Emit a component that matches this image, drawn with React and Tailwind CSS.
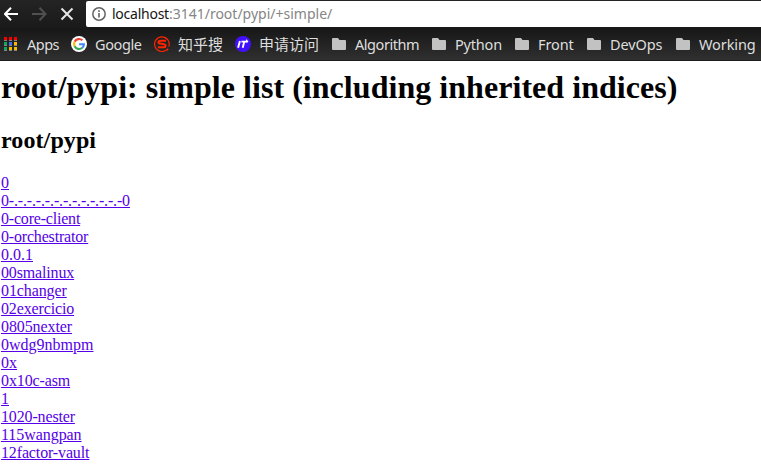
import React from "react";

const packages = [
  { name: "0", tracking: "" },
  { name: "0-.-.-.-.-.-.-.-.-.-.-.-.-0", tracking: "tracking-[-0.16px]" },
  { name: "0-core-client", tracking: "tracking-[-0.2px]" },
  { name: "0-orchestrator", tracking: "tracking-[-0.18px]" },
  { name: "0.0.1", tracking: "" },
  { name: "00smalinux", tracking: "tracking-[-0.15px]" },
  { name: "01changer", tracking: "tracking-[-0.1px]" },
  { name: "02exercicio", tracking: "tracking-[-0.14px]" },
  { name: "0805nexter", tracking: "tracking-[-0.1px]" },
  { name: "0wdg9nbmpm", tracking: "" },
  { name: "0x", tracking: "" },
  { name: "0x10c-asm", tracking: "tracking-[-0.12px]" },
  { name: "1", tracking: "" },
  { name: "1020-nester", tracking: "tracking-[-0.15px]" },
  { name: "115wangpan", tracking: "tracking-[-0.06px]" },
  { name: "12factor-vault", tracking: "tracking-[-0.14px]" },
];

function AppsIcon() {
  const colors = ["#f60000", "#f60000", "#f60000", "#10a860", "#4468f8", "#f8b800", "#10a860", "#f8b800", "#f8b800"];
  return (
    <svg width="14" height="14" viewBox="0 0 14 14" shapeRendering="crispEdges">
      {colors.map((c, i) => (
        <g key={i}>
          <rect x={(i % 3) * 5} y={Math.floor(i / 3) * 5} width="3" height="3" fill={c} />
          <rect x={(i % 3) * 5} y={Math.floor(i / 3) * 5 + 3} width="3" height="1" fill="#a8a29c" opacity="0.75" />
        </g>
      ))}
    </svg>
  );
}

function GoogleIcon() {
  return (
    <svg width="16" height="16" viewBox="0 0 16 16" fill="none" strokeWidth="2.1">
      <circle cx="8" cy="8" r="8" fill="#fff" />
      <path d="M11.4 4.3A5 5 0 0 0 3.6 5.8" stroke="#ea4335" />
      <path d="M3.7 5.6A5 5 0 0 0 3.7 10.4" stroke="#fbbc05" />
      <path d="M3.6 10.2A5 5 0 0 0 11.3 11.8" stroke="#34a853" />
      <path d="M8.1 8.2H12.9C12.8 9.7 12.2 11 11.2 11.8" stroke="#4285f4" />
    </svg>
  );
}

function SogouIcon() {
  return (
    <svg width="16" height="16" viewBox="0 0 16 16" fill="none" stroke="#fb2500">
      <path d="M12.8 13.6A7.3 7.3 0 1 1 14.8 10.6" strokeWidth="1.2" />
      <path d="M12 4.7H6.5C4 4.7 3.6 7.2 6 7.6L10 8.3C12.4 8.8 12 11.3 9.6 11.3H4" strokeWidth="2" />
      <path d="M12.6 14.4L14.2 12.8" strokeWidth="1.5" />
    </svg>
  );
}

function ItIcon() {
  return (
    <svg width="16" height="16" viewBox="0 0 16 16">
      <circle cx="8" cy="8" r="8" fill="#4310ff" />
      <path d="M4.9 5L3.1 11.8M6.4 5.6H12.8M9.3 5.4L7.7 11.8" stroke="#fff" strokeWidth="1.9" fill="none" />
      <path d="M11 3L13.6 5.8L11 6.6Z" fill="#fff" />
    </svg>
  );
}

function FolderIcon() {
  return (
    <svg width="14" height="12" viewBox="0 0 14 12">
      <path d="M1 0H6L7.5 2H13Q14 2 14 3V11Q14 12 13 12H1Q0 12 0 11V1Q0 0 1 0Z" fill="#c2c2c2" />
    </svg>
  );
}

const bookmarks = [
  { label: "Apps", icon: <AppsIcon />, item: "w-[67px] gap-[9px]", text: "tracking-[-0.5px]" },
  { label: "Google", icon: <GoogleIcon />, item: "w-[83px] gap-2", text: "tracking-[-0.4px]" },
  { label: "知乎搜", icon: <SogouIcon />, item: "w-[81px] gap-2", text: "text-[15px]" },
  { label: "申请访问", icon: <ItIcon />, item: "w-[97px] gap-2", text: "text-[15px]" },
  { label: "Algorithm", icon: <FolderIcon />, item: "w-[100px] gap-[9px]", text: "tracking-[-0.45px]" },
  { label: "Python", icon: <FolderIcon />, item: "w-[83px] gap-[9px]", text: "tracking-[-0.2px]" },
  { label: "Front", icon: <FolderIcon />, item: "w-[72px] gap-[9px]", text: "tracking-[-0.1px]" },
  { label: "DevOps", icon: <FolderIcon />, item: "w-[89px] gap-[9px]", text: "tracking-[-0.1px]" },
  { label: "Working", icon: <FolderIcon />, item: "w-[84px] gap-[9px]", text: "tracking-[-0.1px]" },
];

export default function App() {
  return (
    <div className="h-[464px] w-[761px] overflow-hidden bg-white">
      <header className="font-['Noto_Sans','Noto_Sans_CJK_SC',sans-serif]">
        <div className="flex h-7 bg-linear-to-b from-[#242424] to-[#1a1a1a] pt-px">
          <div className="flex w-[86px] pt-[6px] pl-1">
            <svg width="72" height="14" viewBox="0 0 72 14" fill="none" strokeWidth="2">
              <path d="M14 7H1.5M7 .8L1 7L7 13.2" stroke="#fff" />
              <path d="M28 7H41M35.5 .8L41.5 7L35.5 13.2" stroke="#505050" />
              <path d="M57.5 1.5L68.5 12.5M68.5 1.5L57.5 12.5" stroke="#e6e6e6" />
            </svg>
          </div>
          <div className="flex h-[26px] flex-1 items-center rounded-l-[2px] bg-white pl-[6px]">
            <svg width="14" height="14" viewBox="0 0 14 14" fill="none" stroke="#626262">
              <circle cx="7" cy="7" r="6.2" strokeWidth="1.5" />
              <path d="M7 6V10.5M7 3.3V5" strokeWidth="1.6" />
            </svg>
            <span className="ml-[6px] text-sm whitespace-pre text-[#858585]">
              <span className="tracking-[-0.25px] text-[#141414]">localhost</span>:3141/root/pypi/+simple/
            </span>
          </div>
        </div>
        <nav className="flex h-[33px] items-center border-b border-[#1c1c1c] bg-linear-to-b from-[#171717] to-[#303030] pl-1 text-[14.5px] whitespace-nowrap text-[#dedede]">
          {bookmarks.map(({ label, icon, item, text }) => (
            <div key={label} className={`flex shrink-0 items-center ${item}`}>
              {icon}
              <span className={`pt-px ${text}`}>{label}</span>
            </div>
          ))}
        </nav>
      </header>
      <main className="pl-px font-['Liberation_Serif',serif] text-black">
        <h1 className="pt-2 text-[32px] leading-[37px] font-bold tracking-[0.045px]">root/pypi: simple list (including inherited indices)</h1>
        <h2 className="mt-[21px] text-2xl leading-[27px] font-bold tracking-[0.1px]">root/pypi</h2>
        <div className="mt-5 text-base leading-[18px]">
          {packages.map(({ name, tracking }) => (
            <div key={name}>
              <a href="#" className={`text-[#5500e8] underline ${tracking}`}>{name}</a>
            </div>
          ))}
        </div>
      </main>
    </div>
  );
}
